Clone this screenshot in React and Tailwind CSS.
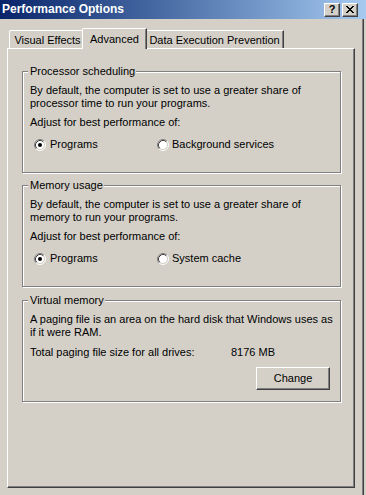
import React from "react";

function Radio({ checked }) {
  return (
    <svg width="12" height="12" viewBox="0 0 12 12" className="shrink-0">
      <circle cx="6" cy="6" r="4.5" fill="#ffffff" />
      <path d="M2.11 9.89 A5.5 5.5 0 0 1 9.89 2.11" stroke="#808080" strokeWidth="1" fill="none" />
      <path d="M9.89 2.11 A5.5 5.5 0 0 1 2.11 9.89" stroke="#ffffff" strokeWidth="1" fill="none" />
      <path d="M2.82 9.18 A4.5 4.5 0 0 1 9.18 2.82" stroke="#404040" strokeWidth="1" fill="none" />
      <path d="M9.18 2.82 A4.5 4.5 0 0 1 2.82 9.18" stroke="#d4d0c8" strokeWidth="1" fill="none" />
      {checked && <circle cx="6" cy="6" r="2" fill="#000000" />}
    </svg>
  );
}

function RadioRow({ a, b }) {
  return (
    <div className="flex items-center h-[13px] mt-[9px]">
      <div className="flex items-center gap-[4px] ml-[4px] w-[123px]">
        <Radio checked />
        <span>{a}</span>
      </div>
      <div className="flex items-center gap-[3px]">
        <Radio />
        <span>{b}</span>
      </div>
    </div>
  );
}

function Group({ title, children, className = "" }) {
  return (
    <fieldset
      className={
        "ml-[14px] w-[319px] border border-[#808080] shadow-[inset_1px_1px_0_#ffffff,1px_1px_0_#ffffff] px-[7px] " +
        className
      }
    >
      <legend className="-ml-[2px] px-[2px] pr-[1px] bg-[#d4d0c8] leading-[13px]">{title}</legend>
      {children}
    </fieldset>
  );
}

export default function App() {
  return (
    <div
      className="w-[366px] h-[495px] bg-[#d4d0c8] overflow-hidden text-[11px] leading-[13px] text-black whitespace-nowrap"
      style={{ fontFamily: '"Liberation Sans", Arial, sans-serif' }}
    >
      {/* Title bar */}
      <div className="h-[19px] flex items-center bg-gradient-to-r from-[#0a246a] to-[#a6caf0]">
        <span className="pl-[2px] text-white font-bold text-[12px] flex-1">Performance Options</span>
        <div className="flex gap-[2px] mr-[8px]">
          <div className="w-[16px] h-[14px] bg-[#d4d0c8] border-t border-l border-white border-r border-b border-r-[#404040] border-b-[#404040] shadow-[inset_-1px_-1px_0_#808080] flex items-center justify-center">
            <span className="font-bold text-[11px] leading-[11px] text-black">?</span>
          </div>
          <div className="w-[16px] h-[14px] bg-[#d4d0c8] border-t border-l border-white border-r border-b border-r-[#404040] border-b-[#404040] shadow-[inset_-1px_-1px_0_#808080] flex items-center justify-center">
            <svg width="8" height="7" viewBox="0 0 8 7">
              <path d="M0 0h2v1h1v1h2V1h1V0h2v1H7v1H6v1H5v1h1v1h1v1h1v1H6V6H5V5H3v1H2v1H0V6h1V5h1V4h1V3H2V2H1V1H0z" fill="#000" />
            </svg>
          </div>
        </div>
      </div>

      <div className="flex">
        <div className="w-[362px] pl-[7px] pr-[7px]">
          {/* Tabs */}
          <div className="h-[29px] flex items-end pl-[2px]">
            <div className="w-[75px] h-[18px] border-l border-t border-white border-r border-r-[#404040] shadow-[inset_-1px_0_0_#808080] rounded-tl-[2px] flex items-center justify-center pt-[1px] pl-[2px]">
              Visual Effects
            </div>
            <div className="relative z-10 -ml-[2px] -mr-[2px] w-[65px] h-[21px] -mb-[1px] bg-[#d4d0c8] border-l border-t border-white border-r border-r-[#404040] shadow-[inset_-1px_0_0_#808080] rounded-tl-[2px] flex items-start justify-center pt-[4px]">
              Advanced
            </div>
            <div className="w-[139px] h-[18px] border-l border-t border-white border-r border-r-[#404040] shadow-[inset_-1px_0_0_#808080] rounded-tl-[2px] flex items-center justify-center pt-[1px]">
              Data Execution Prevention
            </div>
          </div>

          {/* Panel */}
          <div className="h-[440px] border-l border-t border-white border-r border-b border-r-[#404040] border-b-[#404040] shadow-[inset_-1px_-1px_0_#808080] flex flex-col">
            <Group title="Processor scheduling" className="mt-[16px] pb-[21px]">
              <div className="pt-[6px]">
                <div>By default, the computer is set to use a greater share of</div>
                <div>processor time to run your programs.</div>
                <div className="mt-[6px]">Adjust for best performance of:</div>
                <RadioRow a="Programs" b="Background services" />
              </div>
            </Group>

            <Group title="Memory usage" className="mt-[6px] pb-[21px]">
              <div className="pt-[6px]">
                <div>By default, the computer is set to use a greater share of</div>
                <div>memory to run your programs.</div>
                <div className="mt-[6px]">Adjust for best performance of:</div>
                <RadioRow a="Programs" b="System cache" />
              </div>
            </Group>

            <Group title="Virtual memory" className="mt-[7px] pb-[11px]">
              <div className="pt-[6px]">
                <div>A paging file is an area on the hard disk that Windows uses as</div>
                <div>if it were RAM.</div>
                <div className="mt-[7px] flex">
                  <span className="w-[201px]">Total paging file size for all drives:</span>
                  <span>8176 MB</span>
                </div>
                <div className="mt-[8px] flex justify-end pr-[3px]">
                  <button className="w-[74px] h-[23px] bg-[#d4d0c8] border-t border-l border-white border-r border-b border-r-[#404040] border-b-[#404040] shadow-[inset_-1px_-1px_0_#808080] flex items-center justify-center">
                    Change
                  </button>
                </div>
              </div>
            </Group>
          </div>
        </div>
        <div className="w-[1px] h-[476px] bg-[#808080]" />
        <div className="w-[1px] h-[476px] bg-[#404040]" />
      </div>
    </div>
  );
}
